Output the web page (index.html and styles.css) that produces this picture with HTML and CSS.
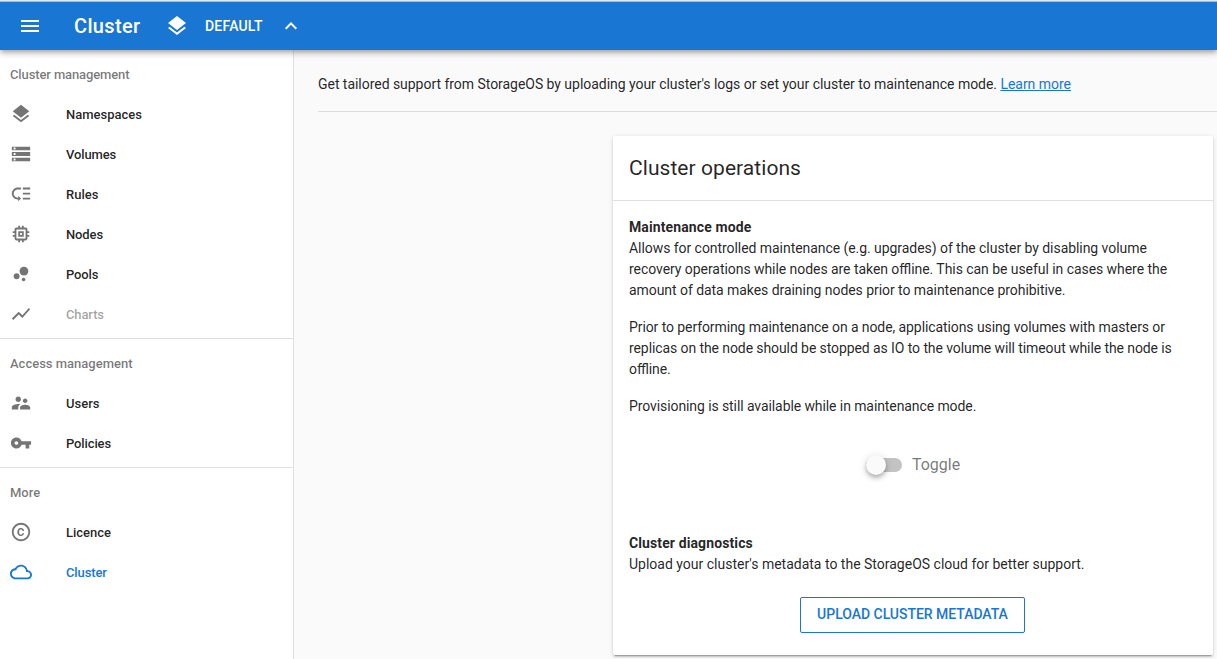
FILE: index.html
```
<!DOCTYPE html>
<html lang="en">
<head>
<meta charset="utf-8">
<title>Cluster</title>
<link rel="stylesheet" href="styles.css">
</head>
<body>
<header class="toolbar">
  <svg class="toolbar-icon menu-icon" viewBox="0 0 24 24"><path d="M3 18h18v-2H3v2zm0-5h18v-2H3v2zm0-7v2h18V6H3z"/></svg>
  <h1 class="toolbar-title">Cluster</h1>
  <svg class="toolbar-icon layers-icon" viewBox="0 0 24 24"><path d="M11.99 18.54l-7.37-5.73L3 14.07l9 7 9-7-1.63-1.27-7.38 5.74zM12 16l7.36-5.73L21 9l-9-7-9 7 1.63 1.27L12 16z"/></svg>
  <span class="namespace">Default</span>
  <svg class="chevron" viewBox="0 0 24 24"><path d="M12 8l-6 6 1.41 1.41L12 10.83l4.59 4.58L18 14z"/></svg>
</header>
<div class="layout">
  <nav class="sidebar">
    <section class="group">
      <h2 class="subheader tight">Cluster management</h2>
      <a class="item"><svg class="icon" viewBox="0 0 24 24"><path d="M11.99 18.54l-7.37-5.73L3 14.07l9 7 9-7-1.63-1.27-7.38 5.74zM12 16l7.36-5.73L21 9l-9-7-9 7 1.63 1.27L12 16z"/></svg><span>Namespaces</span></a>
      <a class="item tight"><svg class="icon" viewBox="0 0 24 24"><path d="M2 20h20v-4H2v4zm2-3h2v2H4v-2zM2 4v4h20V4H2zm4 3H4V5h2v2zm-4 7.300h20V9.700H2v4.600zm2-3.300h2v2H4v-2z"/></svg><span>Volumes</span></a>
      <a class="item"><svg class="icon" viewBox="0 0 24 24"><path d="M14 5h8v2h-8zm0 5.500h8v2h-8zm0 5.500h8v2h-8zM2 11.500C2 15.080 4.920 18 8.500 18H9v2l3-3-3-3v2h-.5C6.020 16 4 13.980 4 11.500S6.020 7 8.500 7H12V5H8.500C4.920 5 2 7.920 2 11.500z"/></svg><span>Rules</span></a>
      <a class="item tight"><svg class="icon" viewBox="0 0 24 24"><path d="M15 9H9v6h6V9zm-2 4h-2v-2h2v2zm8-2V9h-2V7c0-1.100-.9-2-2-2h-2V3h-2v2h-2V3H9v2H7c-1.100 0-2 .9-2 2v2H3v2h2v2H3v2h2v2c0 1.100.9 2 2 2h2v2h2v-2h2v2h2v-2h2c1.100 0 2-.9 2-2v-2h2v-2h-2v-2h2zm-4 6H7V7h10v10z"/></svg><span>Nodes</span></a>
      <a class="item tight"><svg class="icon" viewBox="0 0 24 24"><circle cx="7.200" cy="14.400" r="3.200"/><circle cx="14.800" cy="18" r="2"/><circle cx="15.200" cy="8.800" r="4.800"/></svg><span>Pools</span></a>
      <a class="item tight disabled"><svg class="icon" viewBox="0 0 24 24"><path d="M3.500 18.490l6-6.010 4 4L22 6.920l-1.410-1.410-7.090 7.970-4-4L2 16.990z"/></svg><span>Charts</span></a>
    </section>
    <section class="group">
      <h2 class="subheader">Access management</h2>
      <a class="item"><svg class="icon" viewBox="0 0 24 24"><path d="M16.500 12c1.380 0 2.490-1.120 2.490-2.500S17.880 7 16.500 7C15.120 7 14 8.120 14 9.500s1.120 2.500 2.500 2.500zM9 11c1.660 0 2.990-1.340 2.990-3S10.660 5 9 5C7.340 5 6 6.340 6 8s1.340 3 3 3zm7.500 3c-1.830 0-5.500.92-5.500 2.750V19h11v-2.250c0-1.830-3.670-2.750-5.500-2.750zM9 13c-2.330 0-7 1.170-7 3.500V19h7v-2.250c0-.85.33-2.340 2.370-3.470C10.500 13.100 9.660 13 9 13z"/></svg><span>Users</span></a>
      <a class="item tight"><svg class="icon" viewBox="0 0 24 24"><path d="M12.650 10C11.830 7.670 9.610 6 7 6c-3.310 0-6 2.690-6 6s2.690 6 6 6c2.610 0 4.830-1.670 5.650-4H17v4h4v-4h2v-4H12.650zM7 14c-1.100 0-2-.9-2-2s.9-2 2-2 2 .9 2 2-.9 2-2 2z"/></svg><span>Policies</span></a>
    </section>
    <section class="group">
      <h2 class="subheader">More</h2>
      <a class="item"><svg class="icon" viewBox="0 0 24 24"><path d="M10.080 10.860c.05-.33.16-.62.300-.87s.34-.46.590-.62c.24-.15.540-.22.910-.23.230.01.440.05.630.13.200.09.380.21.520.36s.25.330.34.530.13.420.140.640h1.790c-.02-.47-.11-.9-.28-1.290s-.4-.73-.7-1.010-.66-.5-1.080-.66-.88-.23-1.390-.23c-.65 0-1.220.11-1.700.34s-.88.53-1.200.92-.56.840-.71 1.360S8 11.290 8 11.870v.27c0 .58.080 1.120.230 1.640s.39.970.71 1.350.72.690 1.200.91 1.050.34 1.700.34c.47 0 .91-.08 1.320-.23s.77-.36 1.080-.63.560-.58.740-.94.290-.74.3-1.150h-1.790c-.01.210-.06.4-.15.580s-.21.330-.36.460-.32.230-.52.300c-.19.070-.39.090-.6.100-.36-.01-.66-.08-.89-.23-.25-.16-.45-.37-.59-.62s-.25-.55-.3-.88-.08-.67-.08-1v-.27c0-.35.03-.68.080-1.010zM12 2C6.480 2 2 6.480 2 12s4.480 10 10 10 10-4.480 10-10S17.520 2 12 2zm0 18c-4.410 0-8-3.590-8-8s3.590-8 8-8 8 3.590 8 8-3.590 8-8 8z"/></svg><span>Licence</span></a>
      <a class="item tight active"><svg class="icon" viewBox="0 0 24 24"><path d="M19.350 10.040C18.670 6.590 15.640 4 12 4 9.110 4 6.600 5.640 5.350 8.040 2.340 8.360 0 10.910 0 14c0 3.310 2.690 6 6 6h13c2.760 0 5-2.240 5-5 0-2.640-2.050-4.780-4.650-4.960zM19 18H6c-2.210 0-4-1.790-4-4s1.790-4 4-4h.71C7.370 7.690 9.480 6 12 6c3.040 0 5.500 2.460 5.500 5.500v.5H19c1.660 0 3 1.340 3 3s-1.340 3-3 3z"/></svg><span>Cluster</span></a>
    </section>
  </nav>
  <main class="content">
    <p class="intro">Get tailored support from StorageOS by uploading your cluster's logs or set your cluster to maintenance mode. <a class="link" href="#">Learn more</a></p>
    <article class="card">
      <h2 class="card-title">Cluster operations</h2>
      <div class="card-body">
        <h3 class="heading">Maintenance mode</h3>
        <p class="text summary">Allows for controlled maintenance (e.g. upgrades) of the cluster by disabling volume recovery operations while nodes are taken offline. This can be useful in cases where the amount of data makes draining nodes prior to maintenance prohibitive.</p>
        <p class="text note">Prior to performing maintenance on a node, applications using volumes with masters or replicas on the node should be stopped as IO to the volume will timeout while the node is offline.</p>
        <p class="text note">Provisioning is still available while in maintenance mode.</p>
        <div class="switch"><span class="track"><span class="thumb"></span></span><span class="switch-label">Toggle</span></div>
        <h3 class="heading">Cluster diagnostics</h3>
        <p class="text">Upload your cluster's metadata to the StorageOS cloud for better support.</p>
        <button class="upload">Upload cluster metadata</button>
      </div>
    </article>
  </main>
</div>
</body>
</html>
```
FILE: styles.css
```
* { box-sizing: border-box; }

body {
  margin: 0;
  height: 659px;
  overflow: hidden;
  display: flex;
  flex-direction: column;
  background: #fafafa;
  color: rgba(0, 0, 0, 0.87);
  font: 14px/1.5 Roboto, sans-serif;
  font-feature-settings: "liga" 1;
}

h1, h2, h3, p { margin: 0; }

.toolbar {
  position: relative;
  z-index: 1;
  flex: none;
  height: 50px;
  display: flex;
  align-items: center;
  padding: 1px 0 0 18px;
  border-top: 1px solid #e6e6e6;
  background: #1976d2;
  color: #fff;
  box-shadow: inset 0 1px #b3b9bc, 0 2px 4px -1px rgba(0, 0, 0, 0.2), 0 4px 5px rgba(0, 0, 0, 0.14), 0 1px 10px rgba(0, 0, 0, 0.12);
}

.toolbar svg { fill: currentColor; }
.toolbar-icon { width: 24px; height: 24px; }

.toolbar-title {
  width: 91px;
  margin-left: 32px;
  font-size: 20px;
  font-weight: 500;
  letter-spacing: 0.35px;
}

.namespace {
  width: 78px;
  margin-left: 16px;
  font-weight: 500;
  letter-spacing: 0.2px;
  text-transform: uppercase;
}

.chevron { width: 24px; height: 24px; margin-left: -4px; }

.layout { flex: 1; min-height: 0; display: flex; }

.sidebar {
  flex: none;
  width: 294px;
  background: #fff;
  border-right: 1px solid #e0e0e0;
}

.group { padding: 4px 0; }
.group + .group { border-top: 1px solid #e0e0e0; }

.subheader, .item {
  display: flex;
  align-items: center;
  height: 40px;
  padding-left: 10px;
  font-size: 13px;
  font-weight: 500;
}

.subheader { padding-top: 2px; color: rgba(0, 0, 0, 0.54); }
.item span { padding-top: 2px; }
.tight { letter-spacing: -0.12px; }

.icon {
  width: 22px;
  height: 22px;
  margin-right: 34px;
  fill: #757575;
}

.disabled { color: rgba(0, 0, 0, 0.38); }
.active { color: #1976d2; }
.active .icon { fill: currentColor; }

.content { flex: 1; min-width: 0; padding: 24px 0 0 24px; }

.intro {
  height: 38px;
  border-bottom: 1px solid #dcdcdc;
  letter-spacing: -0.037px;
}

.link { color: #1976d2; }

.card {
  width: 600px;
  height: 519px;
  margin: 24px 4px 0 auto;
  background: #fff;
  border-radius: 2px;
  box-shadow: 0 3px 1px -2px rgba(0, 0, 0, 0.2), 0 2px 2px rgba(0, 0, 0, 0.14), 0 1px 5px rgba(0, 0, 0, 0.12);
}

.card-title {
  height: 65px;
  padding: 0 16px;
  border-bottom: 1px solid #e0e0e0;
  font-size: 21px;
  font-weight: 400;
  line-height: 64px;
  letter-spacing: 0.06px;
}

.card-body {
  display: flex;
  flex-direction: column;
  padding: 16px;
}

.heading { font-size: 14px; font-weight: 700; letter-spacing: 0.11px; }
.text { margin-bottom: 16px; }
.summary { letter-spacing: -0.055px; }
.note { letter-spacing: -0.09px; }

.switch {
  display: flex;
  align-items: center;
  align-self: center;
  gap: 10px;
  height: 24px;
  margin: 20px 0 56px;
  color: rgba(0, 0, 0, 0.54);
  font-size: 16px;
}

.track {
  position: relative;
  width: 36px;
  height: 14px;
  border-radius: 7px;
  background: #c3c3c3;
}

.thumb {
  position: absolute;
  top: -3px;
  left: 0;
  width: 20px;
  height: 20px;
  border-radius: 50%;
  background: #fafafa;
  box-shadow: 0 2px 4px -1px rgba(0, 0, 0, 0.2), 0 4px 5px rgba(0, 0, 0, 0.14), 0 1px 10px rgba(0, 0, 0, 0.12);
}

.upload {
  align-self: center;
  width: 225px;
  height: 36px;
  margin: 6px 1px 0 0;
  padding: 0 0 2px;
  border: 1px solid #1976d2;
  border-radius: 2px;
  background: transparent;
  color: #1976d2;
  font: 500 14px Roboto, sans-serif;
  letter-spacing: -0.03px;
  text-transform: uppercase;
}
```
